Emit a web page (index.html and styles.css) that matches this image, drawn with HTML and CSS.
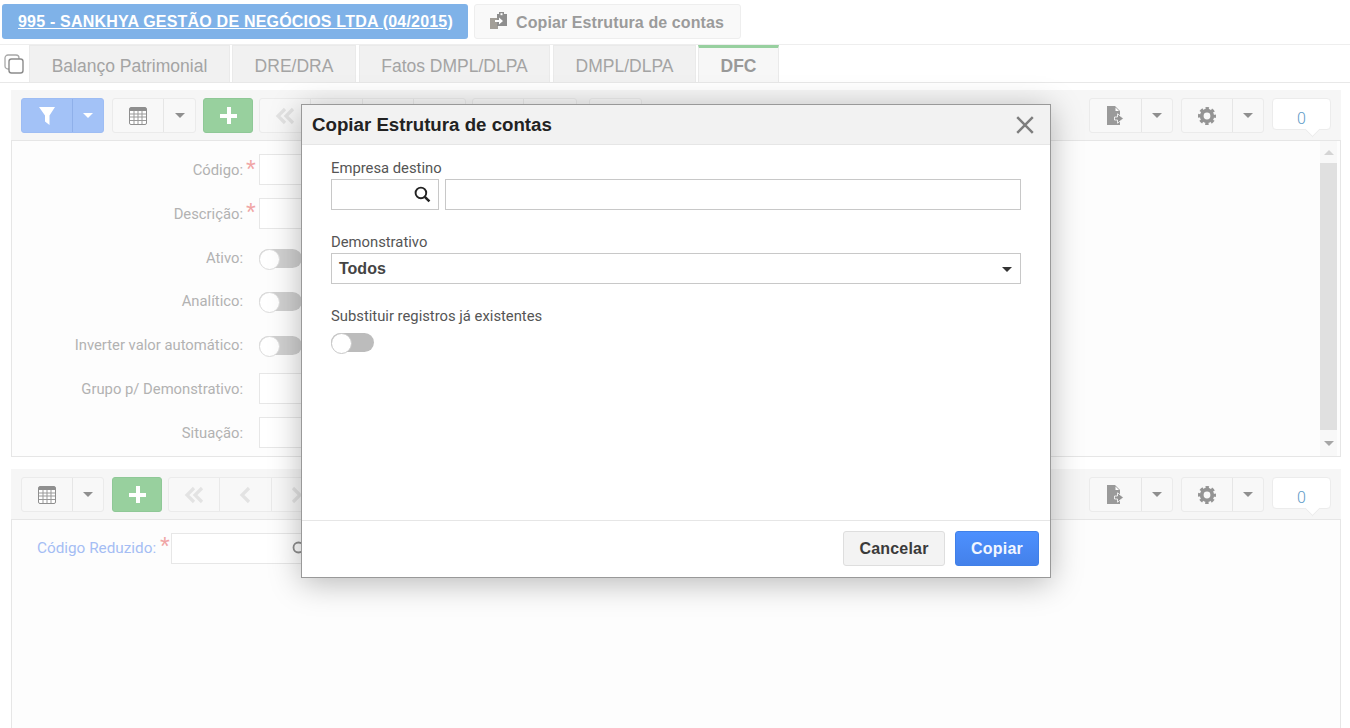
FILE: index.html
```html
<!DOCTYPE html>
<html lang="pt-BR">
<head>
<meta charset="utf-8">
<title>Copiar Estrutura de contas</title>
<link rel="stylesheet" href="styles.css">
</head>
<body>
<svg class="defs" width="0" height="0" aria-hidden="true">
  <symbol id="i-table" viewBox="0 0 18 18"><rect x=".5" y=".5" width="17" height="17" rx="1.5" fill="#fff" stroke="#8f8f8f"/><rect x="1" y="1" width="16" height="3" fill="#8f8f8f"/><path d="M1 7h16M1 10h16M1 13.500h16M5 4v13M9 4v13M13 4v13" stroke="#999" fill="none"/></symbol>
  <symbol id="i-export" viewBox="0 0 18 19"><path d="M0 0h8l5 5v14H0z" fill="#9a9a9a"/><path d="M8.500 1.500 12 5H8.500z" fill="#fff"/><path d="M7.500 11h3V7.800l6 4.700-6 4.700V14h-3z" fill="#949494" stroke="#fff" stroke-width=".8"/></symbol>
  <symbol id="i-gear" viewBox="0 0 18 18"><circle cx="9" cy="9" r="5.300" fill="none" stroke="#949494" stroke-width="3.800"/><circle cx="9" cy="9" r="7.700" fill="none" stroke="#949494" stroke-width="2.600" stroke-dasharray="3.400 2.650" stroke-dashoffset="1.700"/></symbol>
  <symbol id="i-dbl" viewBox="0 0 20 18"><path d="M10 2 3 9l7 7M18 2l-7 7 7 7" fill="none" stroke="#e3e3e3" stroke-width="3.200"/></symbol>
  <symbol id="i-prev" viewBox="0 0 14 18"><path d="M11 2 4 9l7 7" fill="none" stroke="#e3e3e3" stroke-width="3.200"/></symbol>
  <symbol id="i-next" viewBox="0 0 14 18"><path d="m3 2 7 7-7 7" fill="none" stroke="#e3e3e3" stroke-width="3.200"/></symbol>
  <symbol id="i-search" viewBox="0 0 16 16"><circle cx="6.500" cy="6.500" r="5" fill="none" stroke="currentColor" stroke-width="1.800"/><path d="m10.200 10.200 4.300 4.300" stroke="currentColor" stroke-width="2.400" fill="none"/></symbol>
</svg>

<header class="topbar">
  <a class="company" href="#">995 - SANKHYA GESTÃO DE NEGÓCIOS LTDA (04/2015)</a>
  <button class="copy-btn" type="button">
    <svg class="copy-icon" viewBox="0 0 18 18" width="18" height="18"><path d="M0 7h8v11H0z" fill="#a39f98"/><path d="M7 3h2V1h5v2h3v12H7z" fill="#8e8e8e"/><path d="M10.500 2.200h2v2h-2z" fill="#fff"/><path d="M5 9h4V6.500l4 3.500-4 3.500V11H5z" fill="#fff"/></svg>
    <span>Copiar Estrutura de contas</span>
  </button>
</header>

<nav class="tabs">
  <svg class="tabs-icon" viewBox="0 0 20 20" width="20" height="20"><rect x="1" y="1" width="14" height="14" rx="3" fill="none" stroke="#a8a8a8" stroke-width="1.300"/><rect x="5" y="5" width="14" height="14" rx="2.500" fill="#fff" stroke="#8c8c8c" stroke-width="1.400"/></svg>
  <span class="tab tab-a">Balanço Patrimonial</span>
  <span class="tab tab-b">DRE/DRA</span>
  <span class="tab tab-c">Fatos DMPL/DLPA</span>
  <span class="tab tab-d">DMPL/DLPA</span>
  <span class="tab tab-active">DFC</span>
</nav>

<section class="panel panel-top">
  <div class="toolbar">
    <div class="group group-blue">
      <span class="btn btn-main"><svg viewBox="0 0 16 18" width="16" height="18"><path d="M0 0h16l-5.500 8.500V18L6 14.500v-6z" fill="#fff"/></svg></span>
      <span class="btn btn-caret"><i class="caret caret-white"></i></span>
    </div>
    <div class="group group-list">
      <span class="btn btn-main"><svg width="18" height="18"><use href="#i-table"/></svg></span>
      <span class="btn btn-caret"><i class="caret"></i></span>
    </div>
    <span class="add"><b class="plus"></b></span>
    <div class="group nav-group">
      <span class="btn btn-nav"><svg width="20" height="18"><use href="#i-dbl"/></svg></span>
      <span class="btn btn-nav"><svg width="14" height="18"><use href="#i-prev"/></svg></span>
      <span class="btn btn-nav"><svg width="14" height="18"><use href="#i-next"/></svg></span>
      <span class="btn btn-nav"></span>
    </div>
    <div class="group nav-group">
      <span class="btn btn-nav"></span>
      <span class="btn btn-nav"></span>
    </div>
    <div class="group nav-group nav-single">
      <span class="btn btn-nav"></span>
    </div>
    <div class="right">
      <div class="group">
        <span class="btn btn-main btn-wide"><svg width="18" height="19"><use href="#i-export"/></svg></span>
        <span class="btn btn-caret"><i class="caret"></i></span>
      </div>
      <div class="group">
        <span class="btn btn-main"><svg width="18" height="18"><use href="#i-gear"/></svg></span>
        <span class="btn btn-caret"><i class="caret"></i></span>
      </div>
      <div class="badge">0</div>
    </div>
  </div>
  <div class="body body-top">
    <form class="form">
      <label class="lbl">Código:</label><span class="req">*</span><span class="input"></span>
      <label class="lbl">Descrição:</label><span class="req">*</span><span class="input"></span>
      <label class="lbl">Ativo:</label><span></span><span class="toggle toggle-dim"></span>
      <label class="lbl">Analítico:</label><span></span><span class="toggle toggle-dim"></span>
      <label class="lbl">Inverter valor automático:</label><span></span><span class="toggle toggle-dim"></span>
      <label class="lbl">Grupo p/ Demonstrativo:</label><span></span><span class="input"></span>
      <label class="lbl">Situação:</label><span></span><span class="input"></span>
    </form>
    <div class="scrollbar">
      <i class="arrow-up"></i>
      <div class="thumb"></div>
      <i class="arrow-down"></i>
    </div>
  </div>
</section>

<section class="panel panel-bottom">
  <div class="toolbar">
    <div class="group group-list">
      <span class="btn btn-main"><svg width="18" height="18"><use href="#i-table"/></svg></span>
      <span class="btn btn-caret"><i class="caret"></i></span>
    </div>
    <span class="add add-second"><b class="plus"></b></span>
    <div class="group nav-group">
      <span class="btn btn-nav"><svg width="20" height="18"><use href="#i-dbl"/></svg></span>
      <span class="btn btn-nav"><svg width="14" height="18"><use href="#i-prev"/></svg></span>
      <span class="btn btn-nav"><svg width="14" height="18"><use href="#i-next"/></svg></span>
    </div>
    <div class="right">
      <div class="group">
        <span class="btn btn-main btn-wide"><svg width="18" height="19"><use href="#i-export"/></svg></span>
        <span class="btn btn-caret"><i class="caret"></i></span>
      </div>
      <div class="group">
        <span class="btn btn-main"><svg width="18" height="18"><use href="#i-gear"/></svg></span>
        <span class="btn btn-caret"><i class="caret"></i></span>
      </div>
      <div class="badge">0</div>
    </div>
  </div>
  <div class="body body-bottom">
    <label class="lbl lbl-blue">Código Reduzido:</label><span class="req">*</span>
    <span class="input input-search"><svg class="search-dim" width="16" height="16"><use href="#i-search"/></svg></span>
  </div>
</section>

<div class="dialog" role="dialog">
  <div class="dialog-head">
    <h1>Copiar Estrutura de contas</h1>
    <svg class="close" viewBox="0 0 18 18" width="20" height="20"><path d="m2 2 14 14M16 2 2 16" stroke="#7d7d7d" stroke-width="2.200" fill="none"/></svg>
  </div>
  <div class="dialog-body">
    <div class="field">
      <div class="f-label">Empresa destino</div>
      <div class="f-row">
        <span class="f-input f-code"><svg width="17" height="17"><use href="#i-search"/></svg></span>
        <span class="f-input f-grow"></span>
      </div>
    </div>
    <div class="field">
      <div class="f-label">Demonstrativo</div>
      <div class="f-input f-select"><span>Todos</span><i class="caret caret-dark"></i></div>
    </div>
    <div class="field">
      <div class="f-label">Substituir registros já existentes</div>
      <span class="toggle toggle-modal"></span>
    </div>
  </div>
  <div class="dialog-foot">
    <button class="d-btn d-cancel" type="button">Cancelar</button>
    <button class="d-btn d-copy" type="button">Copiar</button>
  </div>
</div>
</body>
</html>
```
FILE: styles.css
```css
* { box-sizing: border-box; }
html, body { margin: 0; padding: 0; height: 728px; overflow: hidden; background: #fff; }
body { font-family: "Liberation Sans", Arial, sans-serif; color: #333; position: relative; }
.defs { position: absolute; }

.topbar { display: flex; gap: 6px; height: 45px; padding: 4px 0 0 2px; border-bottom: 1px solid #eee; align-items: flex-start; }
.company { width: 466px; height: 35px; background: #7fb2e8; border-radius: 3px; color: #fff; font-size: 16px; font-weight: 700; letter-spacing: .2px; line-height: 35px; padding-left: 16px; text-decoration: underline; white-space: nowrap; }
.copy-btn { width: 267px; height: 35px; background: #f9f9f9; border: 1px solid #eee; border-radius: 3px; font: 700 16px "Liberation Sans", Arial, sans-serif; letter-spacing: .1px; color: #9b9b9b; display: flex; align-items: center; padding: 2px 0 0 15px; gap: 8px; }
.copy-icon { margin-top: -5px; }

.tabs { display: flex; height: 38px; border-bottom: 1px solid #e8e8e8; padding-left: 29px; position: relative; }
.tabs-icon { position: absolute; left: 4px; top: 9px; }
.tab { height: 37px; background: #f1f1f1; border: 1px solid #eaeaea; border-bottom: 0; color: #a4a4a4; font-size: 17.500px; line-height: 41px; text-align: center; white-space: nowrap; }
.tab-a { width: 201px; margin-right: 2px; }
.tab-b { width: 124px; margin-right: 3px; }
.tab-c { width: 191px; margin-right: 3px; }
.tab-d { width: 143px; margin-right: 2px; }
.tab-active { width: 81px; background: #f7f7f7; border-top: 3px solid #97d09f; font-weight: 700; color: #999; line-height: 36px; }

.panel { margin: 0 9px 0 11px; }
.panel-top { margin-top: 7px; }
.panel-bottom { margin-top: 12px; }
.toolbar { height: 50px; background: #f6f6f6; display: flex; align-items: flex-start; padding: 8px 10px 0; position: relative; }
.group { display: flex; height: 35px; border: 1px solid #ebebeb; border-radius: 3px; background: #f8f8f8; }
.btn { display: flex; align-items: center; justify-content: center; height: 100%; }
.btn-main { width: 51px; border-right: 1px solid #e6e6e6; }
.btn-wide { width: 52px; }
.btn-caret { flex: 1; }
.btn-nav { width: 51.250px; border-right: 1px solid #e9e9e9; }
.btn-nav:last-child { border-right: 0; }
.group-blue { width: 83px; background: #a3c2f7; border-color: #9ebdf4; margin-right: 8px; }
.group-blue .btn-main { border-right-color: #8fb0ea; }
.group-list { width: 84px; margin-right: 7px; }
.panel-bottom .group-list { width: 83px; margin-right: 8px; }
.add { width: 50px; height: 35px; border-radius: 3px; background: #98d09e; border: 1px solid #8fc897; position: relative; margin-right: 6px; flex: none; }
.plus { position: absolute; left: 16px; top: 8px; width: 17px; height: 17px; background: linear-gradient(#fff, #fff) center / 100% 4px no-repeat, linear-gradient(#fff, #fff) center / 4px 100% no-repeat; }
.nav-group { margin-right: 6px; }
.nav-single { margin-left: 6px; margin-right: 0; }
.caret { display: block; width: 0; height: 0; border: 5px solid transparent; border-top: 5px solid #8f8f8f; border-bottom: 0; }
.caret-white { border-top-color: #fff; }
.caret-dark { border-top-color: #333; }
.right { margin-left: auto; display: flex; gap: 8px; }
.right .group { width: 84px; }
.right .group + .group { width: 83px; }
.badge { width: 59px; height: 32px; background: #fff; border: 1px solid #ececec; border-radius: 4px; text-align: center; color: #5f9bc8; font: 300 16px/39px Roboto, sans-serif; position: relative; }
.badge::after { content: ""; position: absolute; left: 34px; top: 25px; width: 10px; height: 10px; background: #fff; border-right: 1px solid #ececec; border-bottom: 1px solid #ececec; transform: rotate(45deg); }

.body { background: #fdfdfd; border: 1px solid #e6e6e6; position: relative; }
.body-top { height: 317px; display: flex; }
.body-bottom { height: 220px; display: flex; align-items: flex-start; padding: 13px 0 0 25px; }
.form { display: grid; grid-template-columns: 231px 16px 60px; grid-auto-rows: 31px; row-gap: 12.800px; align-items: center; padding-top: 13px; flex: 1; align-content: start; }
.lbl { font: 14.800px Roboto, sans-serif; color: #b2b2b2; text-align: right; white-space: nowrap; padding-top: 1px; }
.lbl-blue { color: #a5bdf4; font-size: 15.300px; line-height: 31px; width: 119px; flex: none; padding-top: 0; }
.req { color: #f0a5a5; font: 25px/25px "Liberation Sans", Arial, sans-serif; padding: 0 0 0 3px; height: 26px; }
.body-bottom .req { padding: 1px 0 0 4px; width: 15px; flex: none; }
.input { display: block; height: 31px; background: #fff; border: 1px solid #e7e7e7; width: 100%; }
.input-search { width: 200px; flex: none; position: relative; }
.search-dim { position: absolute; left: 120px; top: 7px; color: #8e8e8e; }
.toggle { display: block; width: 43px; height: 19px; border-radius: 10px; position: relative; background: #d0d0d0; }
.toggle::before { content: ""; position: absolute; left: 0; top: 0; width: 19px; height: 19px; border-radius: 50%; background: #fff; border: 1px solid #dcdcdc; }
.toggle-dim { margin-top: 2px; }
.toggle-modal { background: #bcbcbc; }
.toggle-modal::before { border-color: #c8c8c8; }
.scrollbar { width: 17px; margin: 0 3px 0 0; background: #f8f8f8; display: flex; flex-direction: column; align-items: center; }
.thumb { width: 17px; height: 267px; background: #e0e0e0; flex: none; }
.arrow-up, .arrow-down { display: block; width: 0; height: 0; border: 5px solid transparent; flex: none; }
.arrow-up { border-top: 0; border-bottom: 5px solid #d4d4d4; margin: 9px 0 8px; }
.arrow-down { border-bottom: 0; border-top: 5px solid #a6a6a6; margin-top: 11px; }

.dialog { position: absolute; left: 301px; top: 104px; width: 750px; height: 474px; background: #fff; border: 1px solid #999; box-shadow: 0 5px 30px rgba(0,0,0,.28); display: flex; flex-direction: column; }
.dialog-head { height: 40px; flex: none; background: #f2f2f2; border-bottom: 1px solid #e6e6e6; display: flex; align-items: center; justify-content: space-between; padding: 0 15px 0 10px; }
.dialog-head h1 { margin: 0; font-size: 18.700px; font-weight: 700; color: #222; }
.close { margin-top: 1px; }
.dialog-body { flex: 1; padding: 14px 29px 0; display: flex; flex-direction: column; gap: 23px; }
.f-label { font: 14.800px/18px Roboto, sans-serif; color: #555; margin-bottom: 2px; height: 18px; white-space: nowrap; }
.f-row { display: flex; gap: 6px; }
.f-input { display: flex; align-items: center; height: 31px; border: 1px solid #c8c8c8; background: #fff; }
.f-code { width: 108px; justify-content: flex-end; padding-right: 7px; color: #222; flex: none; }
.f-grow { flex: 1; }
.f-select { justify-content: space-between; padding: 1px 8px 0 7px; font: 700 16px "Liberation Sans", Arial, sans-serif; color: #444; }
.field .toggle-modal { margin-top: 8px; }
.dialog-foot { height: 57px; flex: none; border-top: 1px solid #e6e6e6; display: flex; justify-content: flex-end; gap: 10px; padding: 10px 11px 0 0; }
.d-btn { height: 35px; border-radius: 3px; font: 700 16px "Liberation Sans", Arial, sans-serif; letter-spacing: .2px; padding: 0; }
.d-cancel { width: 102px; background: #f3f3f3; border: 1px solid #dedede; color: #3a3a3a; }
.d-copy { width: 84px; background: linear-gradient(#4d90fe, #4481ea); border: 1px solid #4080e8; color: #f2f6ff; }
```
